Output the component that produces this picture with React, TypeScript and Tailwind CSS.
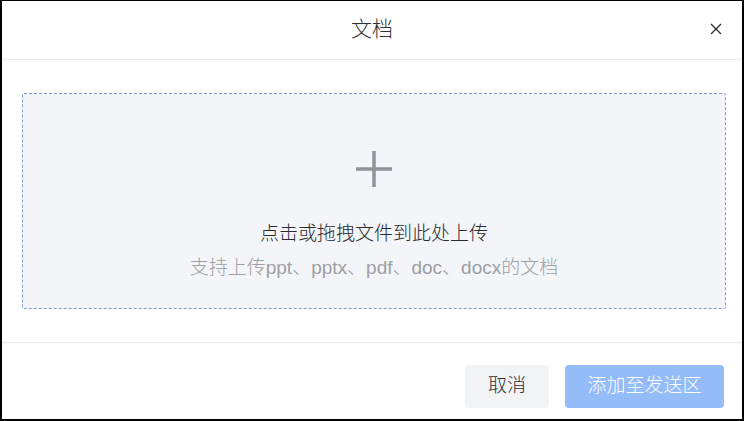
import React from "react";

export default function App() {
  const font = { fontFamily: '"Liberation Sans", "Noto Sans CJK SC", sans-serif' };
  return (
    <div
      className="w-[744px] h-[421px] bg-white border-t border-l-2 border-r-2 border-b-2 border-black flex flex-col"
      style={font}
    >
      <div className="relative h-[59px] shrink-0 flex items-center justify-center pb-[3px] border-b border-[#e8e8e8]">
        <span className="text-[21px] text-[#303133] leading-none font-light">文档</span>
        <svg
          className="absolute right-[20px] top-[22px]"
          width="12"
          height="12"
          viewBox="0 0 12 12"
        >
          <path d="M1 1 L11 11 M11 1 L1 11" stroke="#303133" strokeWidth="1.4" />
        </svg>
      </div>
      <div className="pt-[33px] pl-[20px] pr-[16px] pb-[33px] border-b border-[#e8e8e8]">
        <div className="h-[216px] border border-dashed border-[#7f9bd0] bg-[#f3f5f8] rounded-[2px] flex flex-col items-center">
          <svg className="mt-[57px]" width="36" height="36" viewBox="0 0 36 36">
            <path d="M18 0 V36 M0 18 H36" stroke="#909399" strokeWidth="3.5" />
          </svg>
          <div className="mt-[34px] text-[19px] leading-[25px] text-[#2a2b2e] font-light">
            点击或拖拽文件到此处上传
          </div>
          <div className="mt-[9px] text-[19px] leading-[25px] text-[#9c9fa4] font-light">
            支持上传ppt、pptx、pdf、doc、docx的文档
          </div>
        </div>
      </div>
      <div className="flex-1 flex items-start justify-end pt-[22px] pr-[18px] gap-[16px]">
        <button className="w-[84px] h-[43px] rounded-[4px] bg-[#f2f3f5] text-[19px] text-[#303133] font-light">
          取消
        </button>
        <button className="w-[159px] h-[43px] rounded-[4px] bg-[#94bcf8] text-[19px] text-white font-light">
          添加至发送区
        </button>
      </div>
    </div>
  );
}
